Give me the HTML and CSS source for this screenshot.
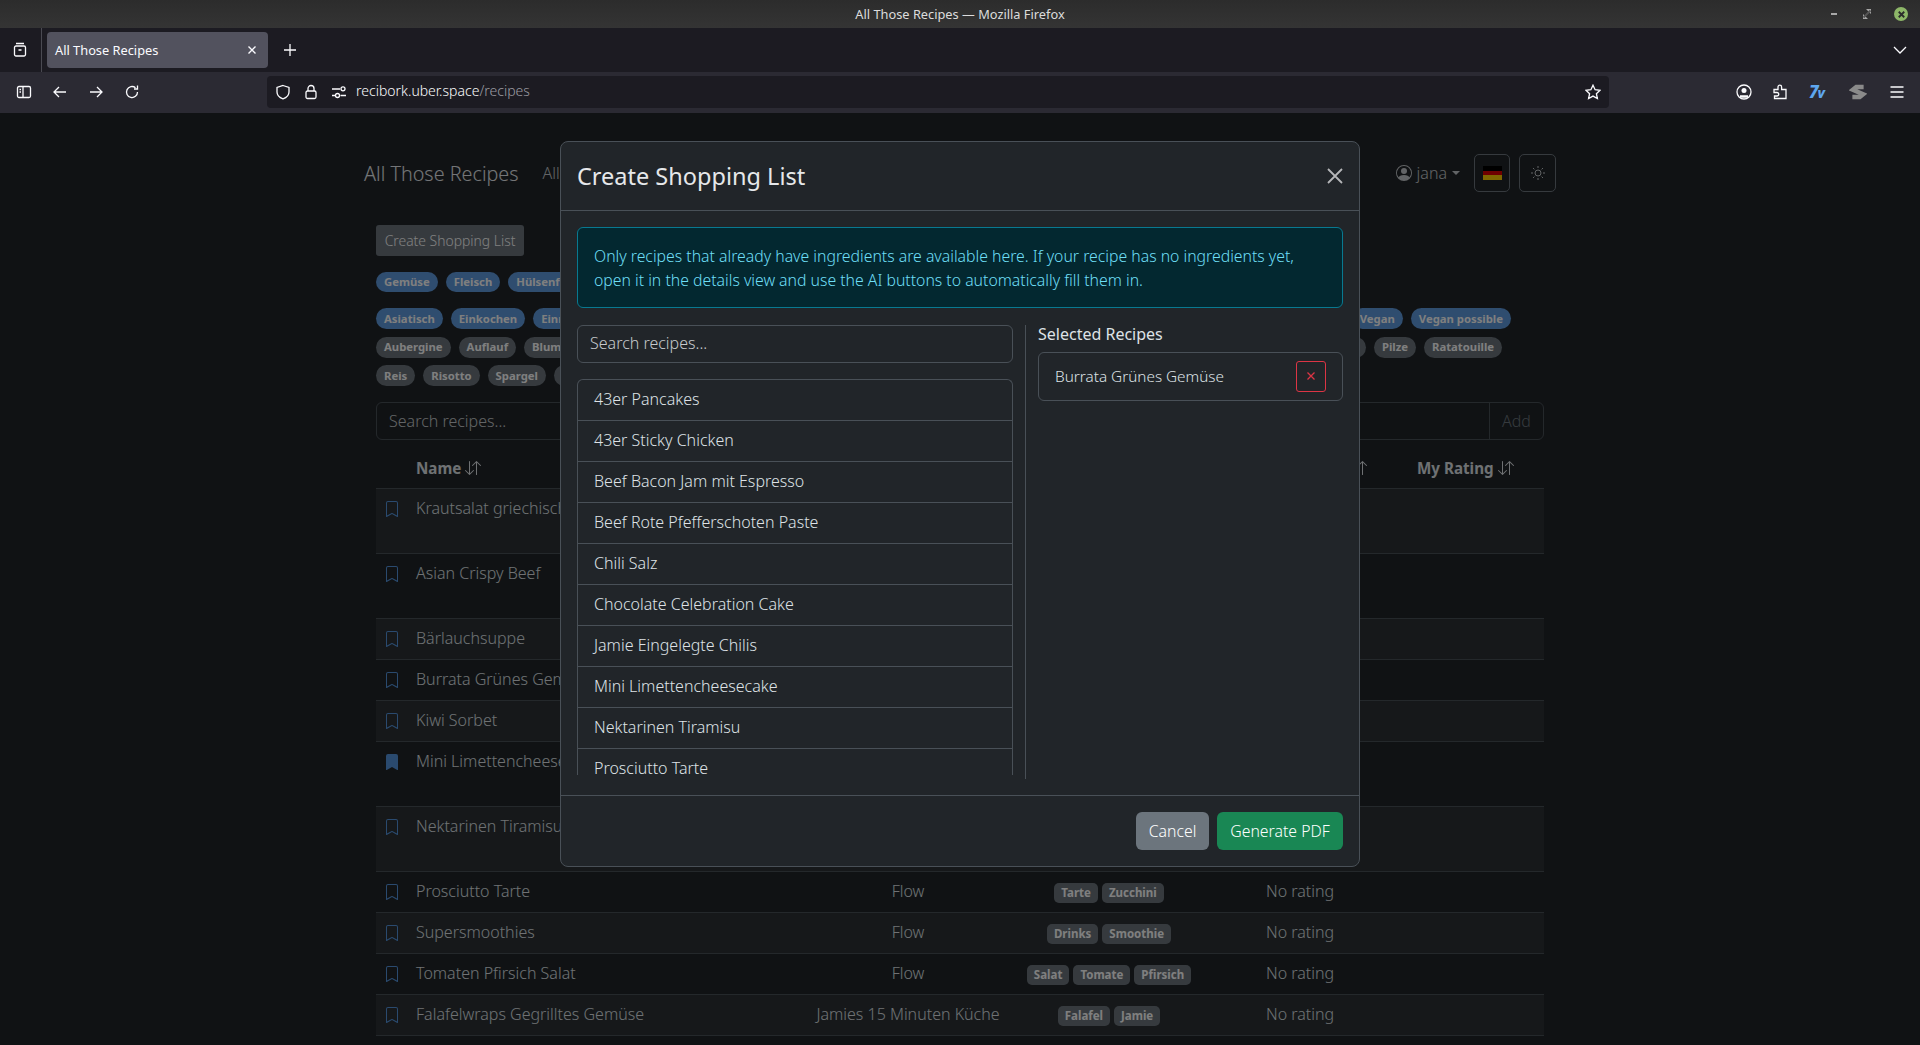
FILE: index.html
```html
<!DOCTYPE html>
<html lang="en">
<head>
    <meta charset="UTF-8">
    <title>All Those Recipes — Mozilla Firefox</title>
    <link rel="stylesheet" href="styles.css">
</head>
<body>
    <svg class="sprites" width="0" height="0">
        <symbol id="bm" viewBox="0 0 16 16"><path fill="currentColor" d="M2 2a2 2 0 0 1 2-2h8a2 2 0 0 1 2 2v13.5a.5.5 0 0 1-.777.416L8 13.101l-5.223 2.815A.5.5 0 0 1 2 15.5V2zm2-1a1 1 0 0 0-1 1v12.566l4.723-2.482a.5.5 0 0 1 .554 0L13 14.566V2a1 1 0 0 0-1-1H4z"/></symbol>
        <symbol id="bm-fill" viewBox="0 0 16 16"><path fill="currentColor" d="M2 2v13.5a.5.5 0 0 0 .74.439L8 13.069l5.26 2.87A.5.5 0 0 0 14 15.5V2a2 2 0 0 0-2-2H4a2 2 0 0 0-2 2z"/></symbol>
        <symbol id="sort" viewBox="0 0 16 16"><path fill="currentColor" d="M11.5 15a.5.5 0 0 0 .5-.5V2.707l3.146 3.147a.5.5 0 0 0 .708-.708l-4-4a.5.5 0 0 0-.708 0l-4 4a.5.5 0 1 0 .708.708L11 2.707V14.5a.5.5 0 0 0 .5.5zm-7-14a.5.5 0 0 1 .5.5v11.793l3.146-3.147a.5.5 0 0 1 .708.708l-4 4a.5.5 0 0 1-.708 0l-4-4a.5.5 0 0 1 .708-.708L4 13.293V1.5a.5.5 0 0 1 .5-.5z"/></symbol>
    </svg>

    <header class="titlebar">
        <span class="titlebar-text">All Those Recipes — Mozilla Firefox</span>
        <div class="wm">
            <svg class="wm-icon" viewBox="0 0 12 12"><rect x="3" y="5" width="6" height="2" fill="#a8a8a8"/></svg>
            <svg class="wm-icon" viewBox="0 0 12 12"><path d="M2 6V11H7ZM10 6V1H5Z" fill="#a8a8a8"/><path d="M2.500 9.500L9.500 2.500" stroke="#555" stroke-width="2"/></svg>
            <span class="wm-close"><svg viewBox="0 0 12 12"><path d="M3 3L9 9M9 3L3 9" stroke="#2b2b2b" stroke-width="2"/></svg></span>
        </div>
    </header>

    <div class="tabbar">
        <div class="tabbar-view">
            <svg class="ico" viewBox="0 0 16 16"><path d="M4 1.500H12M2.500 5.500a1.500 1.500 0 0 1 1.500-1.500h8a1.500 1.500 0 0 1 1.500 1.500v7a1.500 1.500 0 0 1-1.500 1.500H4a1.500 1.500 0 0 1-1.500-1.500zM6.500 8H9.500"/></svg>
        </div>
        <div class="tab">
            <span>All Those Recipes</span>
            <svg class="tab-close" viewBox="0 0 10 10"><path d="M1.500 1.500L8.500 8.500M8.500 1.500L1.500 8.500"/></svg>
        </div>
        <svg class="ico tab-new" viewBox="0 0 16 16"><path d="M8 2V14M2 8H14"/></svg>
        <svg class="ico tab-list" viewBox="0 0 16 16"><path d="M2 5L8 11L14 5"/></svg>
    </div>

    <div class="toolbar">
        <div class="tools-left">
            <svg class="ico" viewBox="0 0 16 16"><rect x="1.500" y="2.500" width="13" height="11" rx="1.500"/><path d="M7 2.500V13.500M3.500 5.500H5M3.500 8H5"/></svg>
            <svg class="ico" viewBox="0 0 16 16"><path d="M14 8H2M7 3L2 8L7 13"/></svg>
            <svg class="ico" viewBox="0 0 16 16"><path d="M2 8H14M9 3L14 8L9 13"/></svg>
            <svg class="ico" viewBox="0 0 16 16"><path d="M13.500 8A5.500 5.500 0 1 1 11.500 3.800M13.500 1.500V5H10"/></svg>
        </div>
        <div class="urlbar">
            <svg class="ico" viewBox="0 0 16 16"><path d="M8 1.500L14 3.500V8C14 11.500 11 13.800 8 14.800C5 13.800 2 11.500 2 8V3.500Z"/></svg>
            <svg class="ico" viewBox="0 0 16 16"><rect x="3" y="7" width="10" height="7.500" rx="1.500"/><path d="M5 7V4.500a3 3 0 0 1 6 0V7"/></svg>
            <svg class="ico" viewBox="0 0 16 16"><path d="M1 5H9M1 11.500H4M9.500 11.500H15"/><circle cx="12" cy="4.800" r="2"/><circle cx="6.500" cy="11.500" r="2"/></svg>
            <span class="url">recibork.uber.space<span class="url-path">/recipes</span></span>
            <svg class="ico url-star" viewBox="0 0 16 16"><path d="M8 1.200L10.100 5.700L15 6.300L11.400 9.700L12.400 14.600L8 12.100L3.600 14.600L4.600 9.700L1 6.300L5.900 5.700Z"/></svg>
        </div>
        <div class="tools-right">
            <svg class="ico" viewBox="0 0 16 16"><circle cx="8" cy="8" r="7"/><circle cx="8" cy="6.500" r="2.500" fill="#fbfbfe" stroke="none"/><path d="M4 12.500H12" stroke-width="2.500"/></svg>
            <svg class="ico" viewBox="0 0 16 16"><path d="M2 5.500H6V3a1.800 1.800 0 0 1 3.600 0V5.500H14V14.500H2.500V12H5a1.500 1.500 0 0 0 0-3.500H2Z"/></svg>
            <span class="ext-t">7<i>v</i></span>
            <svg class="ext-s" viewBox="0 0 16 16"><path d="M13 3.500H6.500L3.500 6L12.500 10L9.500 12.500H3"/></svg>
            <svg class="ico ico-menu" viewBox="0 0 16 16"><path d="M1.500 3H14.500M1.500 8H14.500M1.500 13H14.500"/></svg>
        </div>
    </div>

    <div class="viewport">
        <div class="page">
            <nav class="topnav">
                <span class="brand">All Those Recipes</span>
                <span class="navlink">All Recipes</span>
                <div class="nav-right">
                    <span class="user">
                        <svg class="user-icon" viewBox="0 0 16 16"><path fill="currentColor" d="M11 6a3 3 0 1 1-6 0 3 3 0 0 1 6 0z"/><path fill="currentColor" d="M0 8a8 8 0 1 1 16 0A8 8 0 0 1 0 8zm8-7a7 7 0 0 0-5.468 11.37C3.242 11.226 4.805 10 8 10s4.757 1.225 5.468 2.37A7 7 0 0 0 8 1z"/></svg>
                        jana<span class="caret"></span>
                    </span>
                    <span class="nav-btn nav-btn-flag">
                        <span class="flag"><i class="flag-b"></i><i class="flag-r"></i><i class="flag-g"></i></span>
                    </span>
                    <span class="nav-btn">
                        <svg class="sun" viewBox="0 0 16 16"><circle cx="8" cy="8" r="3"/><path d="M8 1V3M8 13V15M1 8H3M13 8H15M3 3L4.400 4.400M11.600 11.600L13 13M3 13L4.400 11.600M11.600 4.400L13 3"/></svg>
                    </span>
                </div>
            </nav>

            <div class="content">
                <button class="btn-shop">Create Shopping List</button>

                <div class="pills pills-first">
                    <span class="pill pill-blue">Gemüse</span>
                    <span class="pill pill-blue">Fleisch</span>
                    <span class="pill pill-blue">Hülsenfrüchte</span>
                </div>

                <div class="pills pills-split pills-r2">
                    <div class="pill-group">
                        <span class="pill pill-blue">Asiatisch</span>
                        <span class="pill pill-blue">Einkochen</span>
                        <span class="pill pill-blue">Einmachen</span>
                    </div>
                    <div class="pill-group">
                        <span class="pill pill-blue">Vegan</span>
                        <span class="pill pill-blue">Vegan possible</span>
                    </div>
                </div>
                <div class="pills pills-split pills-r3">
                    <div class="pill-group">
                        <span class="pill">Aubergine</span>
                        <span class="pill">Auflauf</span>
                        <span class="pill">Blumenkohl</span>
                    </div>
                    <div class="pill-group">
                        <span class="pill">Pasta</span>
                        <span class="pill">Pilze</span>
                        <span class="pill">Ratatouille</span>
                    </div>
                </div>
                <div class="pills">
                    <span class="pill">Reis</span>
                    <span class="pill">Risotto</span>
                    <span class="pill">Spargel</span>
                    <span class="pill">Suppe</span>
                </div>

                <div class="search-row">
                    <span class="search-text">Search recipes...</span>
                    <span class="search-add">Add</span>
                </div>

                <table class="recipes">
                    <colgroup>
                        <col class="c-mark"><col class="c-name"><col class="c-src"><col class="c-tags"><col class="c-rate"><col class="c-mine">
                    </colgroup>
                    <thead>
                        <tr>
                            <th></th>
                            <th>Name <svg class="sort"><use href="#sort"/></svg></th>
                            <th></th>
                            <th></th>
                            <th class="rate-head">Rating <svg class="sort"><use href="#sort"/></svg></th>
                            <th>My Rating <svg class="sort"><use href="#sort"/></svg></th>
                        </tr>
                    </thead>
                    <tbody>
                        <tr class="tall"><td><svg class="mark"><use href="#bm"/></svg></td><td>Krautsalat griechisch</td><td></td><td></td><td></td><td></td></tr>
                        <tr class="tall"><td><svg class="mark"><use href="#bm"/></svg></td><td>Asian Crispy Beef</td><td></td><td></td><td></td><td></td></tr>
                        <tr><td><svg class="mark"><use href="#bm"/></svg></td><td>Bärlauchsuppe</td><td></td><td></td><td></td><td></td></tr>
                        <tr><td><svg class="mark"><use href="#bm"/></svg></td><td>Burrata Grünes Gemüse</td><td></td><td></td><td></td><td></td></tr>
                        <tr><td><svg class="mark"><use href="#bm"/></svg></td><td>Kiwi Sorbet</td><td></td><td></td><td></td><td></td></tr>
                        <tr class="tall"><td><svg class="mark"><use href="#bm-fill"/></svg></td><td>Mini Limettencheesecake</td><td></td><td></td><td></td><td></td></tr>
                        <tr class="tall"><td><svg class="mark"><use href="#bm"/></svg></td><td>Nektarinen Tiramisu</td><td></td><td></td><td></td><td></td></tr>
                        <tr>
                            <td><svg class="mark"><use href="#bm"/></svg></td><td>Prosciutto Tarte</td><td class="center">Flow</td>
                            <td class="center"><span class="tag">Tarte</span><span class="tag">Zucchini</span></td><td class="rate">No rating</td><td></td>
                        </tr>
                        <tr>
                            <td><svg class="mark"><use href="#bm"/></svg></td><td>Supersmoothies</td><td class="center">Flow</td>
                            <td class="center"><span class="tag">Drinks</span><span class="tag">Smoothie</span></td><td class="rate">No rating</td><td></td>
                        </tr>
                        <tr>
                            <td><svg class="mark"><use href="#bm"/></svg></td><td>Tomaten Pfirsich Salat</td><td class="center">Flow</td>
                            <td class="center"><span class="tag">Salat</span><span class="tag">Tomate</span><span class="tag">Pfirsich</span></td><td class="rate">No rating</td><td></td>
                        </tr>
                        <tr>
                            <td><svg class="mark"><use href="#bm"/></svg></td><td>Falafelwraps Gegrilltes Gemüse</td><td class="center">Jamies 15 Minuten Küche</td>
                            <td class="center"><span class="tag">Falafel</span><span class="tag">Jamie</span></td><td class="rate">No rating</td><td></td>
                        </tr>
                    </tbody>
                </table>
            </div>
        </div>

        <div class="backdrop"></div>

        <div class="modal">
            <div class="modal-head">
                <h2>Create Shopping List</h2>
                <svg class="modal-x" viewBox="0 0 16 16"><path d="M1 1L15 15M15 1L1 15"/></svg>
            </div>
            <div class="modal-body">
                <div class="alert">Only recipes that already have ingredients are available here. If your recipe has no ingredients yet,<br>open it in the details view and use the AI buttons to automatically fill them in.</div>
                <div class="picker">
                    <div class="picker-left">
                        <div class="field">Search recipes...</div>
                        <ul class="list">
                            <li>43er Pancakes</li>
                            <li>43er Sticky Chicken</li>
                            <li>Beef Bacon Jam mit Espresso</li>
                            <li>Beef Rote Pfefferschoten Paste</li>
                            <li>Chili Salz</li>
                            <li>Chocolate Celebration Cake</li>
                            <li>Jamie Eingelegte Chilis</li>
                            <li>Mini Limettencheesecake</li>
                            <li>Nektarinen Tiramisu</li>
                            <li>Prosciutto Tarte</li>
                        </ul>
                    </div>
                    <div class="picker-right">
                        <h3>Selected Recipes</h3>
                        <div class="picked">
                            <span class="picked-name">Burrata Grünes Gemüse</span>
                            <span class="picked-del"><svg viewBox="0 0 10 10"><path d="M1.500 1.500L8.500 8.500M8.500 1.500L1.500 8.500"/></svg></span>
                        </div>
                    </div>
                </div>
            </div>
            <div class="modal-foot">
                <button class="btn btn-cancel">Cancel</button>
                <button class="btn btn-go">Generate PDF</button>
            </div>
        </div>
    </div>
</body>
</html>
```

FILE: styles.css
```css
html, body {
    margin: 0;
    height: 1045px;
    overflow: hidden;
}
body {
    font-family: "Noto Sans", sans-serif;
    font-size: 16px;
    font-weight: 300;
    color: #dee2e6;
    background-color: #212529;
    display: flex;
    flex-direction: column;
}
.sprites {
    display: block;
    height: 0;
}

/* browser chrome */
.titlebar {
    height: 28px;
    flex: none;
    display: flex;
    align-items: center;
    justify-content: center;
    background: linear-gradient(#2c2c2c, #343434);
    position: relative;
}
.titlebar-text {
    font-size: 12.800px;
    font-weight: 400;
    color: #dcdcdc;
}
.wm {
    position: absolute;
    right: 12px;
    top: 7px;
    display: flex;
    align-items: center;
    gap: 21px;
}
.wm-icon {
    width: 12px;
    height: 12px;
}
.wm-close {
    width: 14px;
    height: 14px;
    border-radius: 50%;
    background-color: #8db668;
    display: flex;
    align-items: center;
    justify-content: center;
}
.wm-close svg {
    width: 11px;
    height: 11px;
}
.ico {
    width: 16px;
    height: 16px;
    flex: none;
    fill: none;
    stroke: #fbfbfe;
    stroke-width: 1.300;
}
.tabbar {
    height: 44px;
    flex: none;
    display: flex;
    align-items: center;
    background-color: #1c1b22;
}
.tabbar-view {
    width: 42px;
    height: 44px;
    box-sizing: border-box;
    padding-left: 12px;
    display: flex;
    align-items: center;
    border-right: 1px solid #4a4a52;
}
.tab {
    width: 221px;
    height: 36px;
    margin-left: 5px;
    box-sizing: border-box;
    padding: 0 11px 0 8px;
    display: flex;
    align-items: center;
    justify-content: space-between;
    background-color: #52525e;
    border-radius: 4px;
    font-size: 12.800px;
    font-weight: 400;
    color: #fbfbfe;
}
.tab-close {
    width: 10px;
    height: 10px;
    fill: none;
    stroke: #fbfbfe;
    stroke-width: 1.400;
}
.tab-new {
    margin-left: 14px;
}
.tab-list {
    margin-left: auto;
    margin-right: 12px;
}
.toolbar {
    height: 41px;
    flex: none;
    box-sizing: border-box;
    padding-bottom: 1px;
    display: flex;
    align-items: center;
    background-color: #2b2a33;
}
.tools-left {
    width: 267px;
    flex: none;
    box-sizing: border-box;
    padding-left: 16px;
    display: flex;
    gap: 20px;
}
.urlbar {
    width: 1342px;
    height: 32px;
    flex: none;
    box-sizing: border-box;
    padding: 0 8px;
    display: flex;
    align-items: center;
    gap: 12px;
    background-color: #1c1b22;
    border-radius: 4px;
}
.url {
    font-size: 14px;
    line-height: 18px;
    padding-bottom: 2px;
    color: #fbfbfe;
    margin-left: -3px;
}
.url-path {
    color: #9d9da3;
}
.url-star {
    margin-left: auto;
}
.tools-right {
    flex: 1;
    padding-left: 127px;
    display: flex;
    align-items: center;
    gap: 20px;
}
.ico-menu {
    margin-left: 2px;
}
.ext-t {
    width: 20px;
    margin-left: 1px;
    font-size: 17px;
    font-weight: 800;
    font-style: italic;
    color: #5ea6ee;
    line-height: 16px;
    letter-spacing: -1px;
}
.ext-t i {
    font-size: 14px;
}
.ext-s {
    width: 18px;
    height: 18px;
    fill: none;
    stroke: #8a8a8a;
    stroke-width: 4;
}

/* page under the modal */
.viewport {
    flex: 1;
    position: relative;
    overflow: hidden;
}
.page {
    width: 1192px;
    margin: 0 auto;
    padding-top: 41px;
}
.topnav {
    height: 38px;
    display: flex;
    align-items: center;
}
.brand {
    font-size: 19.800px;
    color: #e8ebee;
    margin-right: 24px;
}
.navlink {
    color: #c5c9cc;
}
.nav-right {
    margin-left: auto;
    display: flex;
    align-items: center;
    gap: 9px;
}
.user {
    display: flex;
    align-items: center;
    gap: 5px;
    margin-right: 5px;
    color: #c5c9cc;
}
.user-icon {
    width: 16px;
    height: 16px;
}
.caret {
    margin-left: 0;
    border-top: 4px solid #c5c9cc;
    border-left: 4px solid transparent;
    border-right: 4px solid transparent;
}
.nav-btn {
    width: 37px;
    height: 38px;
    box-sizing: border-box;
    display: flex;
    align-items: center;
    justify-content: center;
    border: 1px solid #6c757d;
    border-radius: 5px;
}
.nav-btn-flag {
    width: 36px;
}
.flag {
    width: 19px;
    height: 14px;
    display: flex;
    flex-direction: column;
}
.flag i {
    flex: 1;
}
.flag-b {
    background-color: #000;
}
.flag-r {
    background-color: #dd0000;
}
.flag-g {
    background-color: #ffce00;
}
.sun {
    width: 16px;
    height: 16px;
    fill: none;
    stroke: #c5c9cc;
    stroke-width: 1;
}
.content {
    padding: 33px 12px 0;
}
.btn-shop {
    display: block;
    height: 31px;
    width: 148px;
    padding: 0 0 1px;
    font: inherit;
    font-size: 13.900px;
    color: #fff;
    background-color: #6c757d;
    border: 0;
    border-radius: 3px;
}
.pills {
    display: flex;
    gap: 8px;
    margin-bottom: 7.500px;
}
.pills-first {
    margin: 16px 0;
    height: 20px;
}
.pills-split {
    justify-content: space-between;
}
.pills-r2 {
    padding-right: 33px;
}
.pills-r3 {
    padding-right: 42px;
}
.pill-group {
    display: flex;
    gap: 8px;
}
.pill {
    height: 21px;
    box-sizing: border-box;
    padding: 0 8px 1px;
    display: flex;
    align-items: center;
    font-size: 11.300px;
    font-weight: 700;
    color: #fff;
    background-color: #6c757d;
    border-radius: 11px;
}
.pills-first .pill {
    height: 20px;
}
.pill-blue {
    background-color: #5e9ade;
}
.search-row {
    height: 38px;
    margin-top: 16px;
    display: flex;
    border: 1px solid #495057;
    border-radius: 6px;
    box-sizing: border-box;
}
.search-text {
    flex: 1;
    padding-left: 12px;
    line-height: 36px;
    color: #c5c9cc;
}
.search-add {
    width: 53px;
    text-align: center;
    line-height: 36px;
    color: #6c757d;
    border-left: 1px solid #495057;
}
.recipes {
    width: 100%;
    table-layout: fixed;
    border-collapse: collapse;
    line-height: 24px;
}
.c-mark { width: 32px; }
.c-name { width: 400px; }
.c-src { width: 200px; }
.c-tags { width: 202px; }
.c-rate { width: 199px; }
.recipes th {
    height: 48px;
    padding: 8px;
    box-sizing: border-box;
    vertical-align: bottom;
    text-align: left;
    font-size: 15.200px;
    font-weight: 700;
    white-space: nowrap;
    border-bottom: 1px solid #495057;
}
.recipes th.rate-head {
    text-align: right;
    padding-right: 42px;
}
.recipes td {
    height: 41px;
    padding: 7px 8px 8px;
    box-sizing: border-box;
    vertical-align: top;
    white-space: nowrap;
    border-bottom: 1px solid #495057;
}
.recipes tr.tall td {
    height: 65px;
}
.recipes tbody tr:nth-child(odd) td {
    background-color: #2c3034;
}
.recipes td.center {
    text-align: center;
}
.recipes td.rate {
    padding-left: 56px;
}
.sort {
    width: 16px;
    height: 16px;
    vertical-align: -2px;
    color: #dee2e6;
}
.mark {
    display: block;
    margin-top: 5px;
    width: 16px;
    height: 16px;
    color: #5495de;
}
.tag {
    display: inline-block;
    padding: 3px 7px;
    margin: 0 2px;
    font-size: 11.500px;
    line-height: 14px;
    font-weight: 700;
    color: #fff;
    background-color: #6c757d;
    border-radius: 5px;
}

/* modal */
.backdrop {
    position: absolute;
    inset: 0;
    background-color: rgba(0, 0, 0, 0.5);
}
.modal {
    position: absolute;
    left: 560px;
    top: 28px;
    width: 800px;
    box-sizing: border-box;
    background-color: #212529;
    border: 1px solid #495057;
    border-radius: 8px;
}
.modal-head {
    height: 69px;
    box-sizing: border-box;
    padding: 0 16px;
    display: flex;
    align-items: center;
    justify-content: space-between;
    border-bottom: 1px solid #495057;
}
.modal-head h2 {
    margin: 0;
    font-size: 23.500px;
    font-weight: 400;
    color: #e6e8ea;
}
.modal-x {
    width: 16px;
    height: 16px;
    fill: none;
    stroke: #b5b6b8;
    stroke-width: 1.800;
}
.modal-body {
    padding: 16px;
}
.alert {
    height: 81px;
    box-sizing: border-box;
    padding: 16px;
    font-size: 15.800px;
    line-height: 24px;
    color: #6edff6;
    background-color: #032830;
    border: 1px solid #087990;
    border-radius: 6px;
}
.picker {
    margin-top: 17px;
    display: flex;
}
.picker-left {
    width: 436px;
    margin-right: 12px;
    flex: none;
}
.field {
    height: 38px;
    box-sizing: border-box;
    padding-left: 12px;
    line-height: 35px;
    color: #c5c9cc;
    border: 1px solid #495057;
    border-radius: 6px;
}
.list {
    list-style: none;
    margin: 16px 0 4px;
    padding: 0;
    height: 396px;
    overflow: hidden;
    box-sizing: border-box;
    border: 1px solid #495057;
    border-bottom: 0;
    border-radius: 6px 6px 0 0;
}
.list li {
    height: 41px;
    box-sizing: border-box;
    padding: 0 16px;
    line-height: 39px;
    border-bottom: 1px solid #495057;
}
.picker-right {
    flex: 1;
    padding-left: 12px;
    border-left: 1px solid #495057;
}
.picker-right h3 {
    margin: 0 0 8px;
    font-size: 16px;
    line-height: 19px;
    font-weight: 400;
}
.picked {
    height: 49px;
    box-sizing: border-box;
    padding: 0 16px 1px;
    display: flex;
    align-items: center;
    justify-content: space-between;
    border: 1px solid #495057;
    border-radius: 6px;
}
.picked-name {
    font-size: 15.300px;
}
.picked-del {
    width: 30px;
    height: 31px;
    box-sizing: border-box;
    display: flex;
    align-items: center;
    justify-content: center;
    border: 1px solid #dc3545;
    border-radius: 3px;
}
.picked-del svg {
    width: 10px;
    height: 10px;
    fill: none;
    stroke: #dc3545;
    stroke-width: 1.300;
}
.modal-foot {
    height: 71px;
    box-sizing: border-box;
    padding: 0 16px 1px;
    display: flex;
    align-items: center;
    justify-content: flex-end;
    gap: 8px;
    border-top: 1px solid #495057;
}
.btn {
    height: 38px;
    padding: 0;
    font: inherit;
    font-size: 15.800px;
    color: #fff;
    border: 0;
    border-radius: 6px;
}
.btn-cancel {
    width: 73px;
    background-color: #6c757d;
}
.btn-go {
    width: 126px;
    background-color: #198754;
}
```
